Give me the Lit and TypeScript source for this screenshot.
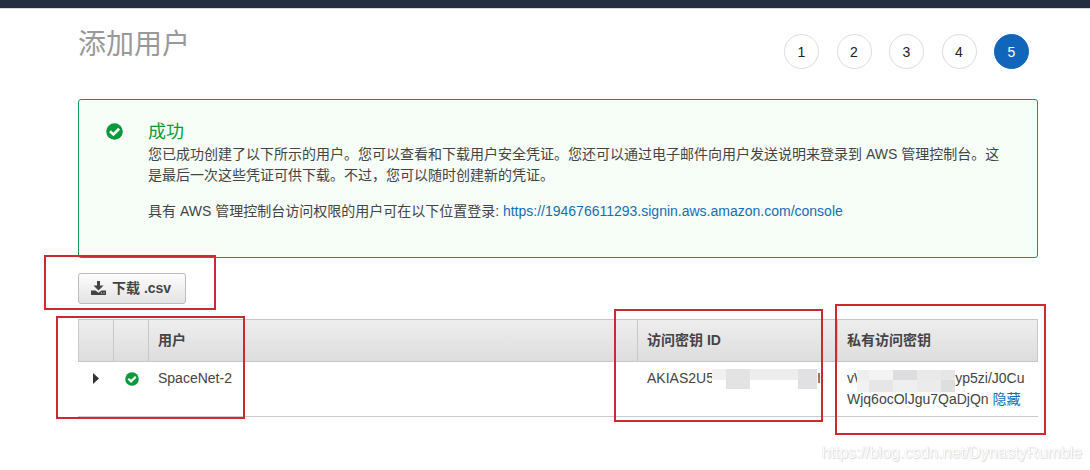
import { LitElement, html, css, svg } from "lit";
import { customElement, state } from "lit/decorators.js";
import { classMap } from "lit/directives/class-map.js";

const STEPS = [1, 2, 3, 4, 5];
const CURRENT_STEP = 5;

const checkIcon = (size: number) => html`
  <svg class="check" width=${size} height=${size} viewBox="0 0 17 17" role="img" aria-label="成功">
    <circle cx="8.5" cy="8.5" r="8.3" fill="#069a3a"></circle>
    <path d="M4 8.2 L7.4 11.4 L13.1 5.8" fill="none" stroke="#fff" stroke-width="2.7"></path>
  </svg>
`;

// Pixelated censor blocks: x, y, width, height, colour.
type Block = [number, number, number, number, string];

const ID_BLOCKS: Block[] = [
  [0, 0, 14, 11, "#f0f0f0"],
  [14, 0, 24, 20, "#e3e3e4"],
  [38, 0, 48, 11, "#ededee"],
  [86, 0, 19, 20, "#e1e1e3"],
];

const SECRET_BLOCKS: Block[] = [
  [0, 0, 12, 10, "#eeeeee"],
  [12, 0, 24, 10, "#f3f3f3"],
  [36, 0, 24, 10, "#dddddf"],
  [60, 0, 24, 10, "#e9e9ea"],
  [84, 0, 14, 10, "#e6e6e6"],
  [0, 10, 12, 12, "#f2f2f2"],
  [12, 10, 24, 12, "#e6e6e7"],
  [36, 10, 24, 12, "#efeff0"],
  [60, 10, 24, 12, "#ebebec"],
  [84, 10, 14, 12, "#dededf"],
];

const mosaic = (name: string, width: number, height: number, blocks: Block[]) => html`<svg
  class=${name}
  width=${width}
  height=${height}
  shape-rendering="crispEdges"
  aria-hidden="true"
>
  <rect width=${width} height=${height} fill="#fff"></rect>
  ${blocks.map(
    ([x, y, w, h, fill]) => svg`<rect x=${x} y=${y} width=${w} height=${h} fill=${fill}></rect>`
  )}
</svg>`;

@customElement("app-root")
export class AppRoot extends LitElement {
  @state() private secretVisible = true;

  static styles = css`
    :host {
      display: block;
      font-family: "Liberation Sans", "Noto Sans CJK SC", sans-serif;
      font-size: 14px;
      line-height: 21px;
      color: #444;
    }
    * {
      box-sizing: border-box;
    }
    a {
      color: #146eb4;
      text-decoration: none;
    }
    .page {
      position: relative;
      min-height: 100vh;
      overflow: hidden;
      background: #fff;
    }
    .topbar {
      height: 9px;
      background: #232f3e;
      border-bottom: 1px solid #d5d8dc;
    }
    .content {
      padding: 15px 52px 0 78px;
    }
    .head {
      display: flex;
      justify-content: space-between;
      align-items: flex-start;
      height: 75px;
      padding-right: 9px;
    }
    .title {
      margin: 0;
      font-size: 28px;
      line-height: 42px;
      font-weight: 400;
      color: #999;
    }
    .steps {
      display: flex;
      justify-content: space-between;
      width: 245px;
      margin: 0;
      padding: 10px 0 0;
      list-style: none;
    }
    .step {
      display: grid;
      place-items: center;
      width: 35px;
      height: 35px;
      padding-top: 1px;
      border: 1px solid #ddd;
      border-radius: 50%;
      color: #222;
    }
    .step.current {
      background: #1166bb;
      border-color: #1166bb;
      color: #fff;
    }
    .alert {
      display: flex;
      gap: 25px;
      padding: 21px 28px 35px 27px;
      border: 1px solid #1a9850;
      border-radius: 3px;
      background: #f7fdf7;
    }
    .alert .check {
      flex: none;
      margin-top: 2px;
    }
    .alert-title {
      margin: 0;
      font-size: 18px;
      line-height: 23px;
      font-weight: 400;
      color: #069a3a;
    }
    .alert p {
      margin: 0 0 15px;
    }
    .alert p:last-child {
      margin: 0;
    }
    .download {
      display: flex;
      align-items: center;
      gap: 6px;
      height: 31px;
      margin: 15px 0;
      padding: 0 14px 0 12px;
      border: 1px solid #bbb;
      border-radius: 3px;
      background: linear-gradient(#fdfdfd, #e3e3e3);
      font: inherit;
      font-weight: 700;
      color: #444;
    }
    .users {
      width: 100%;
      border-collapse: separate;
      border-spacing: 0;
      table-layout: fixed;
    }
    .narrow {
      width: 35px;
    }
    .key {
      width: 200px;
    }
    .secret {
      width: 201px;
    }
    th {
      height: 43px;
      padding: 0 0 0 9px;
      border: 1px solid #c8c8c8;
      border-width: 1px 0 1px 1px;
      background: linear-gradient(#eee, #ddd);
      text-align: left;
    }
    th:last-child {
      border-right-width: 1px;
    }
    td {
      padding: 6px 0 6px 10px;
      border-bottom: 1px solid #ccc;
      vertical-align: top;
      white-space: nowrap;
    }
    .icon-cell {
      padding-left: 0;
      text-align: center;
    }
    .icon-cell .check {
      display: block;
      margin: 4px auto 0 12px;
    }
    .expand {
      display: block;
      margin: 0 auto;
      padding: 5px;
      border: 0;
      background: none;
    }
    .expand svg,
    .download svg {
      display: block;
    }
    .id-mosaic {
      margin: 0 0 -6px -2px;
    }
    .secret-mosaic {
      margin: 0 0 -9px -10px;
    }
    .line {
      display: block;
      height: 21px;
    }
    .mark {
      position: absolute;
      border: 2px solid #cb2a30;
      pointer-events: none;
    }
    .mark-download {
      left: 44px;
      top: 255px;
      width: 172px;
      height: 55px;
    }
    .mark-user {
      left: 56px;
      top: 316px;
      width: 189px;
      height: 103px;
    }
    .mark-id {
      right: 267px;
      top: 309px;
      width: 209px;
      height: 113px;
    }
    .mark-secret {
      right: 44px;
      top: 304px;
      width: 211px;
      height: 131px;
    }
    .watermark {
      position: absolute;
      right: 8px;
      bottom: 7px;
      font-size: 16px;
      color: #fff;
      text-shadow: 0 0 1px #ccc, 1px 1px 1px #ddd;
    }
  `;

  private toggleSecret(event: Event) {
    event.preventDefault();
    this.secretVisible = !this.secretVisible;
  }

  private renderSecret() {
    if (!this.secretVisible) {
      return html`********* <a href="#" @click=${this.toggleSecret}>显示</a>`;
    }
    return html`<span class="line">vW${mosaic("secret-mosaic", 98, 22, SECRET_BLOCKS)}yp5zi/J0Cu</span
      ><span class="line">Wjq6ocOlJgu7QaDjQn <a href="#" @click=${this.toggleSecret}>隐藏</a></span>`;
  }

  render() {
    return html`
      <div class="page">
        <div class="topbar"></div>
        <main class="content">
          <header class="head">
            <h1 class="title">添加用户</h1>
            <ol class="steps">
              ${STEPS.map(
                (n) => html`<li class=${classMap({ step: true, current: n === CURRENT_STEP })}>${n}</li>`
              )}
            </ol>
          </header>

          <section class="alert">
            ${checkIcon(17)}
            <div>
              <h2 class="alert-title">成功</h2>
              <p>
                您已成功创建了以下所示的用户。您可以查看和下载用户安全凭证。您还可以通过电子邮件向用户发送说明来登录到 AWS 管理控制台。这是最后一次这些凭证可供下载。不过，您可以随时创建新的凭证。
              </p>
              <p>
                具有 AWS 管理控制台访问权限的用户可在以下位置登录:
                <a href="https://194676611293.signin.aws.amazon.com/console"
                  >https://194676611293.signin.aws.amazon.com/console</a
                >
              </p>
            </div>
          </section>

          <button class="download" type="button">
            <svg width="15" height="16" viewBox="0 0 15 16" aria-hidden="true">
              <path
                fill="#444"
                fill-rule="evenodd"
                d="M6 0h3v4.500h3.500L7.500 9.500 2.500 4.500H6zM0 9.500h4.500l3 2.300 3-2.300H15v4.500H0zM10 11.500v1h1v-1zM12.500 11.500v1h1v-1z"
              ></path>
            </svg>
            <span>下载 .csv</span>
          </button>

          <table class="users">
            <colgroup>
              <col class="narrow" />
              <col class="narrow" />
              <col />
              <col class="key" />
              <col class="secret" />
            </colgroup>
            <thead>
              <tr>
                <th></th>
                <th></th>
                <th scope="col">用户</th>
                <th scope="col">访问密钥 ID</th>
                <th scope="col">私有访问密钥</th>
              </tr>
            </thead>
            <tbody>
              <tr>
                <td class="icon-cell">
                  <button class="expand" type="button" aria-label="展开">
                    <svg width="6" height="11" viewBox="0 0 6 11"><path d="M0 0L6 5.500L0 11z" fill="#333"></path></svg>
                  </button>
                </td>
                <td class="icon-cell">${checkIcon(14)}</td>
                <td>SpaceNet-2</td>
                <td><span class="line">AKIAS2U5${mosaic("id-mosaic", 105, 20, ID_BLOCKS)}I</span></td>
                <td>${this.renderSecret()}</td>
              </tr>
            </tbody>
          </table>
        </main>

        <div class="mark mark-download"></div>
        <div class="mark mark-user"></div>
        <div class="mark mark-id"></div>
        <div class="mark mark-secret"></div>
        <div class="watermark">https://blog.csdn.net/DynastyRumble</div>
      </div>
    `;
  }
}
